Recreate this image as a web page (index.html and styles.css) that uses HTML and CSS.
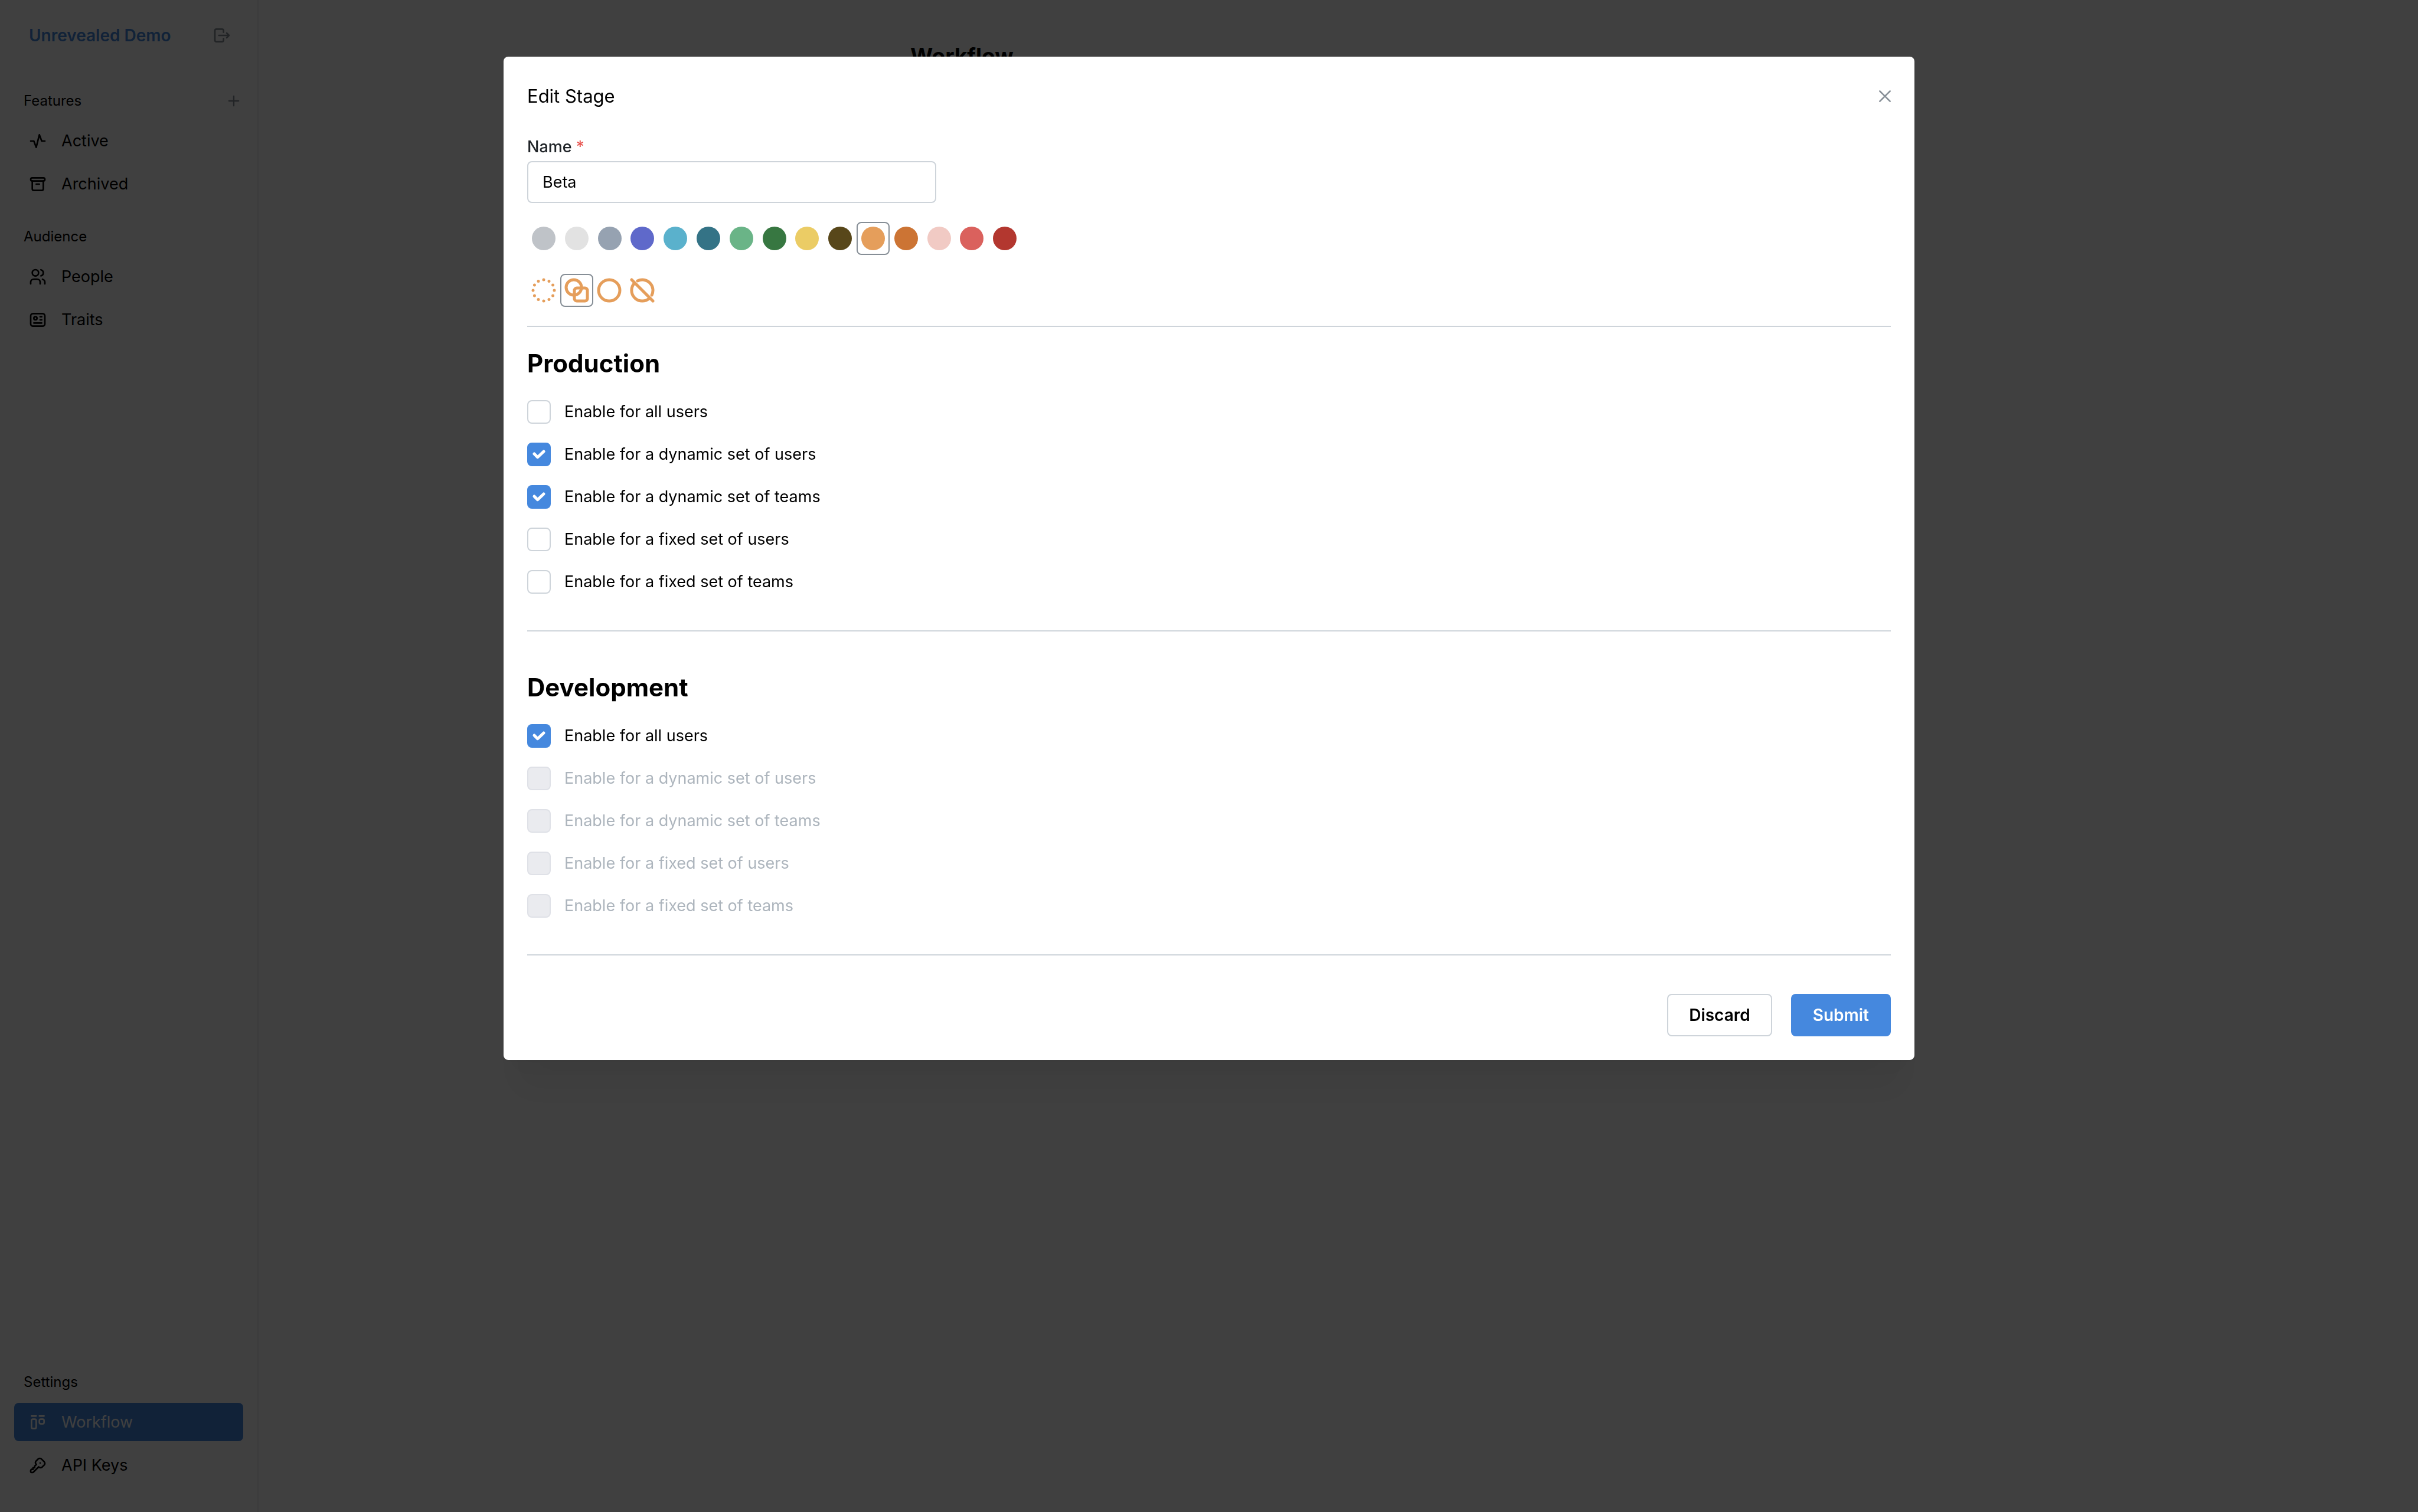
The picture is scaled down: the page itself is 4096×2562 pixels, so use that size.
FILE: index.html
```html
<!DOCTYPE html>
<html lang="en">
<head>
  <meta charset="utf-8">
  <title>Unrevealed Demo – Workflow</title>
  <link rel="stylesheet" href="styles.css">
</head>
<body>
  <div class="app">
    <aside class="sidebar">
      <header class="sidebar-header">
        <a class="brand" href="#">Unrevealed Demo</a>
        <button class="icon-button" type="button" aria-label="Log out">
          <svg class="icon" viewBox="0 0 24 24"><path d="M14 8v-2a2 2 0 0 0 -2 -2h-7a2 2 0 0 0 -2 2v12a2 2 0 0 0 2 2h7a2 2 0 0 0 2 -2v-2"/><path d="M8 12h13l-3 -3m0 6l3 -3"/></svg>
        </button>
      </header>

      <nav class="nav-section" aria-labelledby="nav-features">
        <div class="nav-heading">
          <h2 class="nav-title" id="nav-features">Features</h2>
          <button class="icon-button" type="button" aria-label="Add feature">
            <svg class="icon icon-small" viewBox="0 0 24 24"><path d="M12 5v14M5 12h14"/></svg>
          </button>
        </div>
        <div class="nav-list">
          <a class="nav-item" href="#">
            <svg class="icon" viewBox="0 0 24 24"><path d="M3 12h4l3 8l4 -16l3 8h4"/></svg>
            Active
          </a>
          <a class="nav-item" href="#">
            <svg class="icon" viewBox="0 0 24 24"><rect x="3" y="4" width="18" height="4" rx="2"/><path d="M5 8v10a2 2 0 0 0 2 2h10a2 2 0 0 0 2 -2v-10M10 12h4"/></svg>
            Archived
          </a>
        </div>
      </nav>

      <nav class="nav-section" aria-labelledby="nav-audience">
        <div class="nav-heading">
          <h2 class="nav-title" id="nav-audience">Audience</h2>
        </div>
        <div class="nav-list">
          <a class="nav-item" href="#">
            <svg class="icon" viewBox="0 0 24 24"><circle cx="9" cy="7" r="4"/><path d="M3 21v-2a4 4 0 0 1 4 -4h4a4 4 0 0 1 4 4v2M16 3.13a4 4 0 0 1 0 7.75M21 21v-2a4 4 0 0 0 -3 -3.85"/></svg>
            People
          </a>
          <a class="nav-item" href="#">
            <svg class="icon" viewBox="0 0 24 24"><rect x="3" y="4" width="18" height="16" rx="3"/><circle cx="9" cy="10" r="2"/><path d="M15 8h2M15 12h2M7 16h10"/></svg>
            Traits
          </a>
        </div>
      </nav>

      <nav class="nav-section nav-section-bottom" aria-labelledby="nav-settings">
        <div class="nav-heading">
          <h2 class="nav-title" id="nav-settings">Settings</h2>
        </div>
        <div class="nav-list">
          <a class="nav-item nav-item-active" href="#" aria-current="page">
            <svg class="icon" viewBox="0 0 24 24"><path d="M4 4h6M14 4h6"/><rect x="4" y="8" width="6" height="12" rx="2"/><rect x="14" y="8" width="6" height="6" rx="2"/></svg>
            Workflow
          </a>
          <a class="nav-item" href="#">
            <svg class="icon" viewBox="0 0 24 24"><path d="M16.555 3.843l3.602 3.602a2.877 2.877 0 0 1 0 4.069l-2.643 2.643a2.877 2.877 0 0 1 -4.069 0l-.301 -.301l-6.558 6.558a2 2 0 0 1 -1.239 .578l-.175 .008h-1.172a1 1 0 0 1 -.993 -.883l-.007 -.117v-1.172a2 2 0 0 1 .467 -1.284l.119 -.13l.414 -.414h2v-2h2v-2l2.144 -2.144l-.301 -.301a2.877 2.877 0 0 1 0 -4.069l2.643 -2.643a2.877 2.877 0 0 1 4.069 0zM15 9h.01"/></svg>
            API Keys
          </a>
        </div>
      </nav>
    </aside>

    <main class="page">
      <div class="page-content">
        <h1 class="page-title">Workflow</h1>
      </div>
    </main>
  </div>

  <div class="overlay">
    <section class="modal" role="dialog" aria-modal="true" aria-labelledby="modal-title">
      <header class="modal-header">
        <h2 class="modal-title" id="modal-title">Edit Stage</h2>
        <button class="close-button" type="button" aria-label="Close">
          <svg class="icon" viewBox="0 0 24 24"><path d="M5.500 5.500l13 13M18.500 5.500l-13 13"/></svg>
        </button>
      </header>

      <form class="stage-form">
        <div class="field">
          <label class="field-label" for="stage-name">Name <span class="required">*</span></label>
          <input class="text-input" id="stage-name" type="text" value="Beta" required>
        </div>

        <div class="colors" role="radiogroup" aria-label="Color">
          <input class="pick swatch silver" type="radio" name="color" aria-label="Silver">
          <input class="pick swatch light" type="radio" name="color" aria-label="Light gray">
          <input class="pick swatch slate" type="radio" name="color" aria-label="Slate">
          <input class="pick swatch indigo" type="radio" name="color" aria-label="Indigo">
          <input class="pick swatch sky" type="radio" name="color" aria-label="Sky">
          <input class="pick swatch teal" type="radio" name="color" aria-label="Teal">
          <input class="pick swatch mint" type="radio" name="color" aria-label="Mint">
          <input class="pick swatch green" type="radio" name="color" aria-label="Green">
          <input class="pick swatch yellow" type="radio" name="color" aria-label="Yellow">
          <input class="pick swatch brown" type="radio" name="color" aria-label="Brown">
          <input class="pick swatch orange" type="radio" name="color" aria-label="Orange" checked>
          <input class="pick swatch rust" type="radio" name="color" aria-label="Rust">
          <input class="pick swatch pink" type="radio" name="color" aria-label="Pink">
          <input class="pick swatch coral" type="radio" name="color" aria-label="Coral">
          <input class="pick swatch red" type="radio" name="color" aria-label="Red">
        </div>

        <div class="shapes" role="radiogroup" aria-label="Icon">
          <label class="shape">
            <input class="pick" type="radio" name="icon" aria-label="Dotted circle">
            <svg class="shape-icon" viewBox="0 0 24 24"><path d="M7.5 4.21v.01M4.21 7.5v.01M3 12v.01M4.21 16.5v.01M7.5 19.79v.01M12 21v.01M16.5 19.79v.01M19.79 16.5v.01M21 12v.01M19.79 7.5v.01M16.5 4.21v.01M12 3v.01"/></svg>
          </label>
          <label class="shape">
            <input class="pick" type="radio" name="icon" aria-label="Circle and square" checked>
            <svg class="shape-icon" viewBox="0 0 24 24"><circle cx="9.5" cy="9.5" r="6.5"/><rect x="10" y="10" width="11" height="11" rx="2"/></svg>
          </label>
          <label class="shape">
            <input class="pick" type="radio" name="icon" aria-label="Circle">
            <svg class="shape-icon" viewBox="0 0 24 24"><circle cx="12" cy="12" r="9"/></svg>
          </label>
          <label class="shape">
            <input class="pick" type="radio" name="icon" aria-label="Crossed circle">
            <svg class="shape-icon" viewBox="0 0 24 24"><path d="M20.042 16.045a9 9 0 0 0 -12.087 -12.087m-2.318 1.677a9 9 0 1 0 12.725 12.73M3 3l18 18"/></svg>
          </label>
        </div>

        <hr class="divider">

        <section class="environment">
          <h3 class="environment-title">Production</h3>
          <label class="option"><input class="checkbox" type="checkbox">Enable for all users</label>
          <label class="option"><span class="tick-cell"><input class="checkbox" type="checkbox" checked><svg class="tick" viewBox="0 0 40 40"><path d="M12 19l5.700 5.700l10.300 -9.700"/></svg></span>Enable for a dynamic set of users</label>
          <label class="option"><span class="tick-cell"><input class="checkbox" type="checkbox" checked><svg class="tick" viewBox="0 0 40 40"><path d="M12 19l5.700 5.700l10.300 -9.700"/></svg></span>Enable for a dynamic set of teams</label>
          <label class="option"><input class="checkbox" type="checkbox">Enable for a fixed set of users</label>
          <label class="option"><input class="checkbox" type="checkbox">Enable for a fixed set of teams</label>
        </section>

        <hr class="divider divider-spaced">

        <section class="environment">
          <h3 class="environment-title">Development</h3>
          <label class="option"><span class="tick-cell"><input class="checkbox" type="checkbox" checked><svg class="tick" viewBox="0 0 40 40"><path d="M12 19l5.700 5.700l10.300 -9.700"/></svg></span>Enable for all users</label>
          <label class="option option-disabled"><input class="checkbox" type="checkbox" disabled>Enable for a dynamic set of users</label>
          <label class="option option-disabled"><input class="checkbox" type="checkbox" disabled>Enable for a dynamic set of teams</label>
          <label class="option option-disabled"><input class="checkbox" type="checkbox" disabled>Enable for a fixed set of users</label>
          <label class="option option-disabled"><input class="checkbox" type="checkbox" disabled>Enable for a fixed set of teams</label>
        </section>

        <hr class="divider divider-spaced">

        <footer class="actions">
          <button class="button button-default" type="button">Discard</button>
          <button class="button button-primary" type="submit">Submit</button>
        </footer>
      </form>
    </section>
  </div>
</body>
</html>
```
FILE: styles.css
```css
:root {
  --blue: #4588de;
  --border: #ced4da;
  --gray: #868e96;
  --orange: #e59e5b;
}

*,
*::before {
  box-sizing: border-box;
}

body {
  margin: 0;
  background: #fff;
  color: #000;
  font: 400 27px/42px Inter, "Liberation Sans", sans-serif;
}

h1,
h2,
h3 {
  margin: 0;
}

a {
  color: inherit;
  text-decoration: none;
}

button,
input {
  margin: 0;
  font: inherit;
}

.app {
  display: flex;
  min-height: 100vh;
}

.icon {
  flex: none;
  width: 32px;
  height: 32px;
  fill: none;
  stroke: currentColor;
  stroke-width: 2;
  stroke-linecap: round;
  stroke-linejoin: round;
}

.icon-small {
  width: 28px;
  height: 28px;
}

.icon-button {
  display: grid;
  padding: 0;
  border: 0;
  background: none;
  color: var(--gray);
}

/* Sidebar */

.sidebar {
  display: flex;
  flex: none;
  flex-direction: column;
  gap: 39px;
  width: 438px;
  padding: 40px 24px 47px;
  border-right: 2px solid #e9ecef;
}

.sidebar-header {
  display: flex;
  align-items: center;
  justify-content: space-between;
  height: 40px;
  margin-bottom: 34px;
  padding: 0 20px 0 25px;
}

.brand {
  color: var(--blue);
  font-size: 28px;
  font-weight: 600;
}

.nav-section-bottom {
  margin-top: auto;
}

.nav-heading {
  display: flex;
  align-items: center;
  justify-content: space-between;
  margin-bottom: 17px;
  padding: 0 2px 0 16px;
}

.nav-title {
  font-size: 24px;
  font-weight: 400;
  line-height: 36px;
}

.nav-list {
  display: flex;
  flex-direction: column;
  gap: 8px;
}

.nav-item {
  display: flex;
  align-items: center;
  gap: 24px;
  height: 65px;
  padding: 0 24px;
  border-radius: 8px;
}

.nav-item-active {
  background: var(--blue);
  color: #fff;
}

/* Page behind the dialog */

.page {
  flex: 1;
  padding: 69px 48px;
}

.page-content {
  max-width: 1450px;
  margin: 0 auto;
}

.page-title {
  font-size: 37px;
  font-weight: 700;
  line-height: 52px;
}

/* Dialog */

.overlay {
  position: fixed;
  inset: 0;
  display: flex;
  align-items: flex-start;
  justify-content: center;
  padding: 96px 48px;
  overflow: auto;
  background: rgba(0, 0, 0, 0.75);
}

.modal {
  width: 100%;
  max-width: 2390px;
  padding: 39px 40px 40px;
  border-radius: 8px;
  background: #fff;
  box-shadow:
    0 2px 6px rgba(0, 0, 0, 0.05),
    0 72px 56px -14px rgba(0, 0, 0, 0.05),
    0 34px 34px -14px rgba(0, 0, 0, 0.04);
}

.modal-header {
  display: flex;
  align-items: center;
  justify-content: space-between;
  margin-bottom: 37px;
}

.modal-title {
  font-size: 31px;
  font-weight: 400;
  line-height: 48px;
}

.close-button {
  display: grid;
  place-items: center;
  width: 56px;
  height: 56px;
  margin-right: -18px;
  padding: 0;
  border: 0;
  background: none;
  color: var(--gray);
}

.stage-form {
  display: flex;
  flex-direction: column;
  gap: 32px;
}

.field {
  display: flex;
  flex-direction: column;
  gap: 3px;
  max-width: 693px;
}

.field-label {
  color: #212529;
  font-weight: 500;
}

.required {
  color: #e8544f;
}

.text-input {
  width: 100%;
  height: 71px;
  padding: 0 24px;
  border: 2px solid var(--border);
  border-radius: 8px;
  background: #fff;
  color: #000;
}

.colors,
.shapes {
  display: grid;
  max-width: 837px;
  grid-template-columns: repeat(15, 1fr);
}

.pick {
  display: grid;
  place-content: center;
  width: 100%;
  aspect-ratio: 1;
  appearance: none;
  border: 2px solid transparent;
  border-radius: 8px;
}

.pick:checked {
  border-color: var(--gray);
}

.swatch::before {
  width: 40px;
  height: 40px;
  border-radius: 50%;
  background: currentColor;
  content: "";
}

.silver { color: #bfc3c8; }
.light { color: #e2e2e2; }
.slate { color: #96a2b1; }
.indigo { color: #5f69ca; }
.sky { color: #5ab1cc; }
.teal { color: #347386; }
.mint { color: #6ab487; }
.green { color: #377741; }
.yellow { color: #ebcc65; }
.brown { color: #58471a; }
.orange { color: var(--orange); }
.rust { color: #cc7434; }
.pink { color: #f1cac4; }
.coral { color: #da615d; }
.red { color: #b3372f; }

.shape,
.tick-cell {
  display: grid;
  place-items: center;
}

.shape > *,
.tick-cell > * {
  grid-area: 1 / 1;
}

.shape-icon {
  width: 48px;
  height: 48px;
  fill: none;
  stroke: var(--orange);
  stroke-width: 2.5;
  stroke-linecap: round;
  stroke-linejoin: round;
  pointer-events: none;
}

.divider {
  width: 100%;
  height: 2px;
  margin: 0;
  border: 0;
  background: var(--border);
}

.divider-spaced {
  margin: 30px 0 33px;
}

.environment {
  display: flex;
  flex-direction: column;
  align-items: flex-start;
  gap: 32px;
}

.environment-title {
  font-size: 42px;
  font-weight: 700;
  line-height: 60px;
}

.option {
  display: flex;
  align-items: center;
  gap: 23px;
  height: 40px;
}

.option-disabled {
  color: #adb5bd;
}

.checkbox {
  width: 40px;
  height: 40px;
  appearance: none;
  border: 2px solid var(--border);
  border-radius: 8px;
  background: #fff;
}

.checkbox:checked {
  border-color: var(--blue);
  background: var(--blue);
}

.checkbox:disabled {
  border-color: #dfe1e7;
  background: #eaebef;
}

.tick {
  width: 40px;
  height: 40px;
  fill: none;
  stroke: #fff;
  stroke-width: 5;
  stroke-linecap: round;
  stroke-linejoin: round;
  pointer-events: none;
}

.actions {
  display: flex;
  justify-content: flex-end;
  gap: 32px;
}

.button {
  height: 72px;
  padding: 0 35px;
  border: 2px solid transparent;
  border-radius: 8px;
  font-size: 28px;
  font-weight: 600;
}

.button-default {
  border-color: var(--border);
  background: #fff;
  color: #000;
}

.button-primary {
  background: var(--blue);
  color: #fff;
}
```
